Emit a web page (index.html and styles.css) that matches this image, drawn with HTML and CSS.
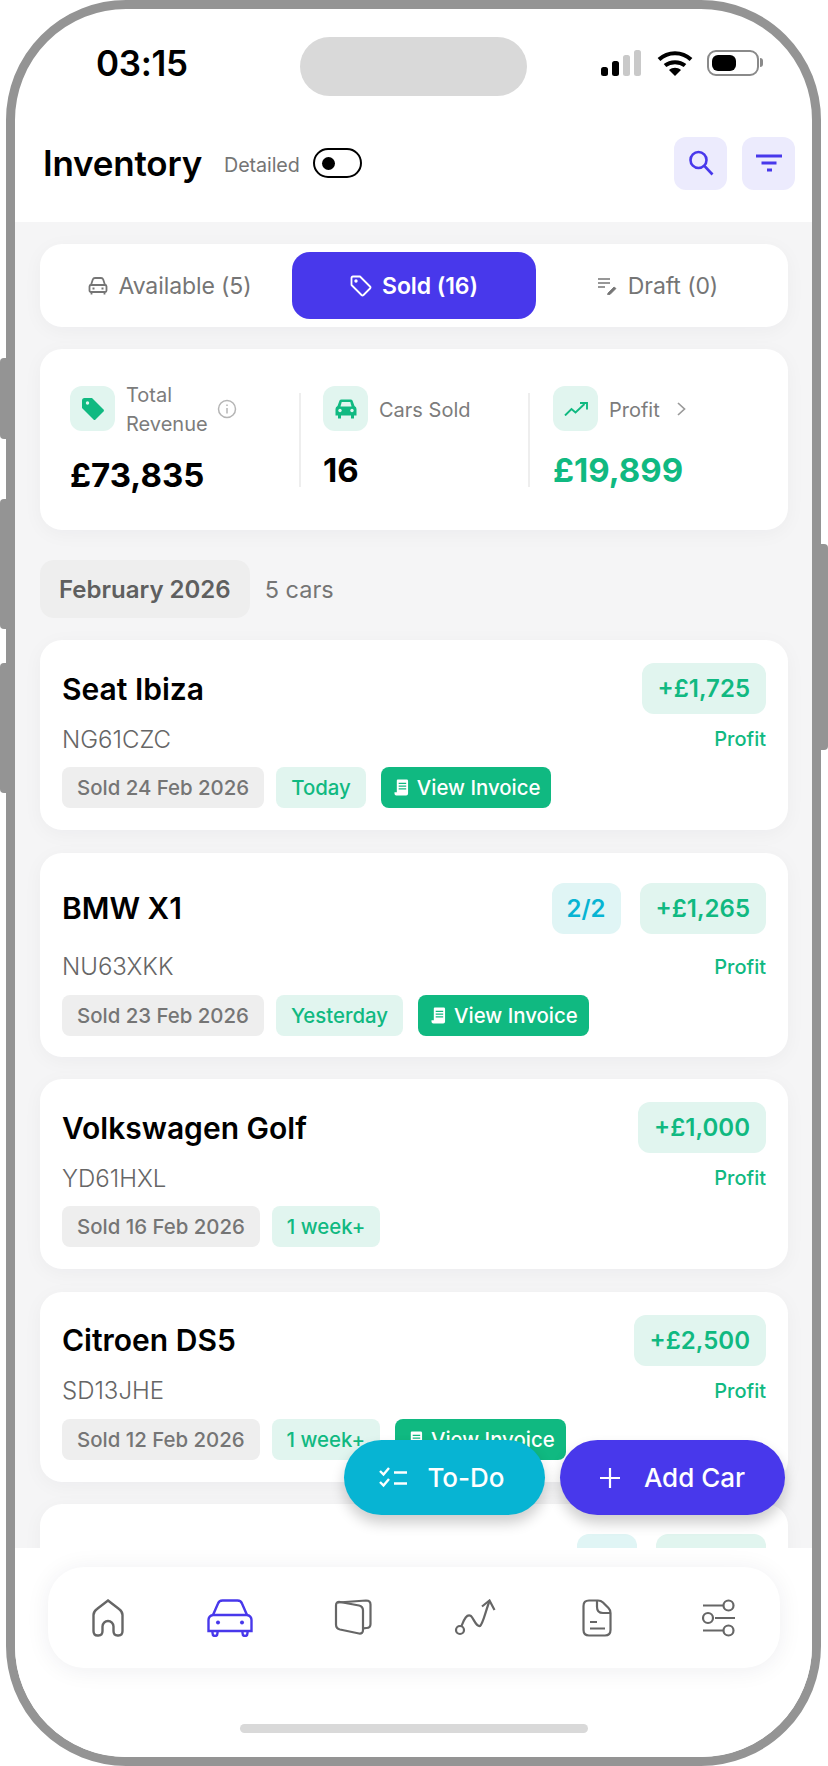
FILE: index.html
```html
<!DOCTYPE html>
<html lang="en">
<head>
<meta charset="UTF-8">
<title>Inventory</title>
<link rel="stylesheet" href="styles.css">
</head>
<body>

<svg class="sprite" aria-hidden="true">
  <symbol id="receipt" viewBox="0 0 16 18">
    <path fill="#fff" d="M4 0.5h9.5a1.5 1.5 0 0 1 1.5 1.5v13.5a2 2 0 0 1-2 2H2.5A2 2 0 0 1 0.5 15.5V14h2.5V1.5a1 1 0 0 1 1-1z"/>
    <path stroke="#10b981" stroke-width="1.4" d="M5 4.5h8M5 7.5h8M5 10.5h8"/>
  </symbol>
</svg>

<div class="side-btn side-btn-a"></div>
<div class="side-btn side-btn-b"></div>
<div class="side-btn side-btn-c"></div>
<div class="side-btn side-btn-r"></div>

<div class="phone">

  <div class="status-bar">
    <div class="time">03:15</div>
    <div class="notch"></div>
    <div class="status-icons">
      <svg width="40" height="26" viewBox="0 0 40 26">
        <rect x="0" y="17" width="7" height="9" rx="2.5" fill="#000"/>
        <rect x="11" y="11" width="7" height="15" rx="2.5" fill="#000"/>
        <rect x="22" y="5" width="7" height="21" rx="2.5" fill="#c9c9c9"/>
        <rect x="33" y="0" width="7" height="26" rx="2.5" fill="#c9c9c9"/>
      </svg>
      <svg width="36" height="26" viewBox="0 0 36 26">
        <path fill="none" stroke="#000" stroke-width="4" d="M2 9.5C11 1 25 1 34 9.5M8 15.5C13.5 11 22.5 11 28 15.5"/>
        <path d="M18 26l-6-6c3.5-3 8.5-3 12 0z" fill="#000"/>
      </svg>
      <div class="battery"><div class="battery-fill"></div></div>
    </div>
  </div>

  <div class="header">
    <div class="header-title">Inventory</div>
    <div class="detail-label">Detailed</div>
    <div class="toggle"><span class="toggle-knob"></span></div>
    <div class="header-actions">
      <div class="icon-btn">
        <svg width="26" height="26" viewBox="0 0 26 26" fill="none" stroke="#4838eb" stroke-width="2.6">
          <circle cx="10.5" cy="10" r="8"/>
          <path d="M16.5 16l8 8.5"/>
        </svg>
      </div>
      <div class="icon-btn">
        <svg width="26" height="18" viewBox="0 0 26 18" fill="none" stroke="#4838eb" stroke-width="2.8">
          <path d="M0 2h26M5.5 9h15M11 16h5"/>
        </svg>
      </div>
    </div>
  </div>

  <div class="content">

    <div class="tabs">
      <div class="tab">
        <svg width="20" height="20" viewBox="0 0 20 20" fill="none" stroke="#757575" stroke-width="1.8">
          <path d="M3 9l1.8-5.500Q5.300 2 7 2h6q1.700 0 2.200 1.500L17 9"/>
          <rect x="1.5" y="9" width="17" height="7" rx="1.5"/>
          <path d="M3.5 16v2.500M16.500 16v2.500M4.500 12.500h2M13.500 12.500h2"/>
        </svg>
        Available (5)
      </div>
      <div class="tab tab-active">
        <svg width="22" height="22" viewBox="0 0 22 22" fill="none" stroke="#fff" stroke-width="1.8" stroke-linejoin="round">
          <path d="M1.5 3q0-1.500 1.500-1.500h7l10 10q1 1 0 2l-6.500 6.500q-1 1-2 0l-10-10z"/>
          <circle cx="6" cy="6" r="0.8" fill="#fff"/>
        </svg>
        Sold (16)
      </div>
      <div class="tab">
        <svg width="20" height="18" viewBox="0 0 20 18" fill="none" stroke="#757575" stroke-width="1.6">
          <path d="M0 2h12M0 6h12M0 10h7"/>
          <path d="M10 16l6-6 2 1.500-6 6h-2.500z" fill="#757575" stroke-width="0.8"/>
        </svg>
        Draft (0)
      </div>
    </div>

    <div class="stats">
      <div class="stat stat-revenue">
        <div class="stat-head">
          <div class="stat-icon">
            <svg width="24" height="24" viewBox="0 0 24 24">
              <path fill="#10b981" d="M1 3.500Q1 1 3.500 1H11l11.500 11.500q1 1 0 2L14.500 22.500q-1 1-2 0L1 11z"/>
              <circle cx="6.5" cy="6" r="1.7" fill="#e1f5ef"/>
            </svg>
          </div>
          <div class="stat-label">Total<br>Revenue</div>
          <svg class="info-icon" width="20" height="20" viewBox="0 0 20 20" fill="none" stroke="#b5b5b5" stroke-width="1.5">
            <circle cx="10" cy="10" r="8.5"/>
            <path d="M10 9v5.500M10 5.500v1.500"/>
          </svg>
        </div>
        <div class="stat-value">£73,835</div>
      </div>
      <div class="stat-divider"></div>
      <div class="stat stat-cars">
        <div class="stat-head">
          <div class="stat-icon">
            <svg width="22" height="20" viewBox="0 0 22 20">
              <path fill="#10b981" d="M4.500 1.500Q5 0.500 6.500 0.500h9q1.500 0 2 1L19.500 7Q21.500 8 21.500 10v6.500h-2.500V19.500h-3V16.500H6V19.500H3V16.500H0.500V10Q0.500 8 2.500 7z"/>
              <path fill="#e1f5ef" d="M5.500 7.500L6.700 3h8.600l1.200 4.500z"/>
              <circle cx="5" cy="11.5" r="1.7" fill="#e1f5ef"/>
              <circle cx="17" cy="11.5" r="1.7" fill="#e1f5ef"/>
            </svg>
          </div>
          <div class="stat-label">Cars Sold</div>
        </div>
        <div class="stat-value">16</div>
      </div>
      <div class="stat-divider"></div>
      <div class="stat stat-profit">
        <div class="stat-head">
          <div class="stat-icon">
            <svg width="24" height="14" viewBox="0 0 24 14" fill="none" stroke="#10b981" stroke-width="1.9">
              <path d="M1 13.500l6.500-6.500 4 3.500 9-8.500"/>
              <path d="M16 1h7v6.500"/>
            </svg>
          </div>
          <div class="stat-label">Profit</div>
          <svg class="chevron" width="9" height="14" viewBox="0 0 9 14" fill="none" stroke="#9a9a9a" stroke-width="1.7">
            <path d="M1 1l6.500 6-6.500 6"/>
          </svg>
        </div>
        <div class="stat-value stat-green">£19,899</div>
      </div>
    </div>

    <div class="month-row">
      <div class="month-pill">February 2026</div>
      <div class="month-count">5 cars</div>
    </div>

    <div class="car-list">

      <div class="car-card">
        <div class="car-top">
          <div class="car-name">Seat Ibiza</div>
          <div class="car-badges"><span class="badge">+£1,725</span></div>
        </div>
        <div class="car-mid">
          <div class="car-reg">NG61CZC</div>
          <div class="profit-label">Profit</div>
        </div>
        <div class="car-tags">
          <span class="tag">Sold 24 Feb 2026</span>
          <span class="tag tag-green">Today</span>
          <span class="tag tag-invoice"><svg width="15" height="17"><use href="#receipt"/></svg>View Invoice</span>
        </div>
      </div>

      <div class="car-card car-card-split">
        <div class="car-top">
          <div class="car-name">BMW X1</div>
          <div class="car-badges">
            <span class="badge badge-cyan">2/2</span>
            <span class="badge">+£1,265</span>
          </div>
        </div>
        <div class="car-mid">
          <div class="car-reg">NU63XKK</div>
          <div class="profit-label">Profit</div>
        </div>
        <div class="car-tags">
          <span class="tag">Sold 23 Feb 2026</span>
          <span class="tag tag-green">Yesterday</span>
          <span class="tag tag-invoice"><svg width="15" height="17"><use href="#receipt"/></svg>View Invoice</span>
        </div>
      </div>

      <div class="car-card">
        <div class="car-top">
          <div class="car-name">Volkswagen Golf</div>
          <div class="car-badges"><span class="badge">+£1,000</span></div>
        </div>
        <div class="car-mid">
          <div class="car-reg">YD61HXL</div>
          <div class="profit-label">Profit</div>
        </div>
        <div class="car-tags">
          <span class="tag">Sold 16 Feb 2026</span>
          <span class="tag tag-green">1 week+</span>
        </div>
      </div>

      <div class="car-card">
        <div class="car-top">
          <div class="car-name">Citroen DS5</div>
          <div class="car-badges"><span class="badge">+£2,500</span></div>
        </div>
        <div class="car-mid">
          <div class="car-reg">SD13JHE</div>
          <div class="profit-label">Profit</div>
        </div>
        <div class="car-tags">
          <span class="tag">Sold 12 Feb 2026</span>
          <span class="tag tag-green">1 week+</span>
          <span class="tag tag-invoice"><svg width="15" height="17"><use href="#receipt"/></svg>View Invoice</span>
        </div>
      </div>

      <div class="car-card car-card-split">
        <div class="car-top">
          <div class="car-name"></div>
          <div class="car-badges">
            <span class="badge badge-cyan badge-blank"></span>
            <span class="badge badge-blank badge-blank-wide"></span>
          </div>
        </div>
      </div>

    </div>
  </div>

  <div class="fab-row">
    <div class="fab fab-todo">
      <svg width="29" height="22" viewBox="0 0 29 22" fill="none" stroke="#fff" stroke-width="2.4">
        <path d="M1 4l3.500 3.500L10 1M1 15l3.500 3.500L10 12M15 5.500h13M15 16.500h13"/>
      </svg>
      To-Do
    </div>
    <div class="fab fab-add">
      <svg width="20" height="20" viewBox="0 0 20 20" fill="none" stroke="#fff" stroke-width="2.2">
        <path d="M10 0v20M0 10h20"/>
      </svg>
      Add Car
    </div>
  </div>

  <div class="bottom">
    <div class="nav">
      <div class="nav-item nav-home">
        <svg width="32" height="38" viewBox="0 0 32 38" fill="none" stroke="#666" stroke-width="2.4">
          <path d="M16 1.500L27 10Q30.500 12.500 30.500 16V32Q30.500 36.500 26.500 36.500H25.500Q21.500 36.500 21.500 32V27.500A5.500 5.500 0 0 0 10.500 27.500V32Q10.500 36.500 6.500 36.500H5.500Q1.500 36.500 1.500 32V16Q1.500 12.500 5 10Z"/>
        </svg>
      </div>
      <div class="nav-item nav-car">
        <svg width="46" height="38" viewBox="0 0 46 38" fill="none" stroke="#4838eb" stroke-width="2.4">
          <path d="M6 16L11 4.500Q12 1.500 15.500 1.500H30.500Q34 1.500 35 4.500L40 16"/>
          <path d="M6 16H40Q44.500 17 44.500 21V32H1.500V21Q1.500 17 6 16Z"/>
          <path d="M5.500 32V34Q5.500 37 8 37T10.500 34V32M35.500 32V34Q35.500 37 38 37T40.500 34V32"/>
          <circle cx="11" cy="23.5" r="2" fill="#4838eb" stroke="none"/>
          <circle cx="35" cy="23.5" r="2" fill="#4838eb" stroke="none"/>
        </svg>
      </div>
      <div class="nav-item">
        <svg width="38" height="38" viewBox="0 0 38 38" fill="none" stroke="#666" stroke-width="2.2">
          <path d="M2 6.500Q2 2.500 6 3L25 6.500Q29 7.500 29 11.500V31Q29 35 25 34.500L6 30.500Q2 29.500 2 25.500Z"/>
          <path d="M4 3.500L32 1.500Q36.500 1.500 36.500 5.500V25Q36.500 29 32.500 29L29 29.300"/>
        </svg>
      </div>
      <div class="nav-item">
        <svg width="42" height="38" viewBox="0 0 42 38" fill="none" stroke="#666" stroke-width="2.2">
          <circle cx="6" cy="31" r="4"/>
          <path d="M7.500 27C10 20 13 14.500 17 17C20 20 22 28 26 27C29 25 31 14 35.500 2"/>
          <path d="M28 7.500L35.500 1.500L40.500 11"/>
        </svg>
      </div>
      <div class="nav-item">
        <svg width="30" height="38" viewBox="0 0 30 38" fill="none" stroke="#666" stroke-width="2.2">
          <path d="M7 1.500H16Q19 1.500 21 3.500L26.500 9Q28.500 11 28.500 14V31Q28.500 36.500 23 36.500H7Q1.500 36.500 1.500 31V7Q1.500 1.500 7 1.500Z"/>
          <path d="M15 1.500V8Q15 14 21 14H28.500"/>
          <path d="M8 23H15M8 29.500H23"/>
        </svg>
      </div>
      <div class="nav-item">
        <svg width="36" height="38" viewBox="0 0 36 38" fill="none" stroke="#666" stroke-width="2.2">
          <path d="M2 6.500H22M14 19H34M2 31.500H22"/>
          <circle cx="27.5" cy="6.5" r="5"/>
          <circle cx="7" cy="19" r="5"/>
          <circle cx="27.5" cy="31.5" r="5"/>
        </svg>
      </div>
    </div>
    <div class="home-bar"></div>
  </div>

</div>

</body>
</html>
```

FILE: styles.css
```css
* {
  box-sizing: border-box;
}
body {
  font-family: Inter, "Noto Sans", sans-serif;
  margin: 0;
  padding: 0;
  width: 828px;
  height: 1766px;
  position: relative;
  overflow: hidden;
  background: #fff;
}
.sprite {
  display: none;
}

/* hardware buttons */
.side-btn {
  position: absolute;
  width: 8px;
  background: #949494;
}
.side-btn-a {
  left: 0;
  top: 358px;
  height: 81px;
  border-radius: 4px 0 0 4px;
}
.side-btn-b {
  left: 0;
  top: 499px;
  height: 130px;
  border-radius: 4px 0 0 4px;
}
.side-btn-c {
  left: 0;
  top: 663px;
  height: 130px;
  border-radius: 4px 0 0 4px;
}
.side-btn-r {
  right: 0;
  top: 544px;
  height: 206px;
  border-radius: 0 4px 4px 0;
}

.phone {
  position: relative;
  margin-left: 6px;
  width: 815px;
  height: 1766px;
  border: 9px solid #949494;
  border-radius: 120px;
  overflow: hidden;
  background: #fff;
  display: flex;
  flex-direction: column;
}

/* status bar */
.status-bar {
  height: 110px;
  flex-shrink: 0;
  display: flex;
  align-items: flex-start;
  padding-left: 81px;
  padding-top: 28px;
}
.time {
  margin-top: 1px;
  font-size: 35px;
  font-weight: 600;
  line-height: 50px;
  letter-spacing: -0.3px;
  width: 204px;
  color: #000;
}
.notch {
  width: 227px;
  height: 59px;
  border-radius: 30px;
  background: #d9d9d9;
}
.status-icons {
  display: flex;
  align-items: center;
  gap: 16px;
  margin-left: 74px;
  margin-top: 13px;
}
.battery {
  position: relative;
  width: 52px;
  height: 26px;
  margin-left: -2px;
  padding: 3px;
  border: 2px solid #8a8a8a;
  border-radius: 9px;
}
.battery::after {
  content: "";
  position: absolute;
  right: -6px;
  top: 6px;
  width: 3px;
  height: 9px;
  border-radius: 0 3px 3px 0;
  background: #8a8a8a;
}
.battery-fill {
  width: 24px;
  height: 100%;
  border-radius: 6px;
  background: #000;
}

/* header */
.header {
  height: 103px;
  flex-shrink: 0;
  display: flex;
  align-items: center;
  padding: 0 17px 15px 28px;
}
.header-title {
  font-size: 35px;
  font-weight: 600;
  letter-spacing: -0.2px;
  color: #000;
}
.detail-label {
  margin-top: 3px;
  margin-left: 22px;
  font-size: 19.7px;
  letter-spacing: -0.1px;
  color: #757575;
}
.toggle {
  width: 49px;
  height: 30px;
  margin-left: 13px;
  padding: 7px;
  border: 2px solid #000;
  border-radius: 15px;
}
.toggle-knob {
  display: block;
  width: 13px;
  height: 13px;
  border-radius: 50%;
  background: #000;
}
.header-actions {
  margin-left: auto;
  display: flex;
  gap: 15px;
}
.icon-btn {
  width: 53px;
  height: 53px;
  border-radius: 12px;
  background: #ecebfd;
  display: flex;
  align-items: center;
  justify-content: center;
}

/* scrolling area */
.content {
  height: 1326px;
  flex-shrink: 0;
  overflow: hidden;
  padding: 22px 24px 0 25px;
  background: #f5f5f6;
}
.tabs {
  display: grid;
  grid-template-columns: repeat(3, 1fr);
  padding: 8px;
  height: 83px;
  border-radius: 22px;
  background: #fff;
  box-shadow: 0 4px 20px rgba(30,30,60,0.04);
}
.tab {
  display: flex;
  align-items: center;
  justify-content: center;
  gap: 10px;
  font-size: 23px;
  letter-spacing: -0.1px;
  color: #757575;
}
.tab-active {
  border-radius: 18px;
  font-weight: 600;
  color: #fff;
  background: #4838eb;
}

/* stats */
.stats {
  display: flex;
  align-items: flex-start;
  height: 181px;
  margin-top: 22px;
  padding: 37px 0 0 30px;
  border-radius: 22px;
  background: #fff;
  box-shadow: 0 4px 20px rgba(30,30,60,0.04);
}
.stat {
  flex-shrink: 0;
}
.stat-revenue {
  width: 229px;
}
.stat-cars {
  width: 227px;
  padding-left: 22px;
}
.stat-profit {
  padding-left: 23px;
}
.stat-divider {
  width: 2px;
  height: 94px;
  margin-top: 7px;
  flex-shrink: 0;
  background: #eeeeee;
}
.stat-head {
  display: flex;
  align-items: center;
  height: 45px;
}
.stat-icon {
  width: 45px;
  height: 45px;
  flex-shrink: 0;
  display: flex;
  align-items: center;
  justify-content: center;
  border-radius: 12px;
  background: #e1f5ef;
}
.stat-label {
  margin-left: 11px;
  margin-top: 3px;
  font-size: 20px;
  line-height: 29px;
  color: #7c7c7c;
}
.info-icon {
  margin-left: 9px;
  flex-shrink: 0;
}
.chevron {
  margin-left: 17px;
}
.stat-value {
  margin-top: 19px;
  font-size: 33px;
  font-weight: 700;
  line-height: 41px;
  color: #000;
}
.stat-revenue .stat-value {
  margin-top: 24px;
}
.stat-green {
  color: #10b981;
}

/* month */
.month-row {
  display: flex;
  align-items: center;
  margin-top: 30px;
}
.month-pill {
  height: 58px;
  padding: 0 19px;
  display: flex;
  align-items: center;
  border-radius: 14px;
  font-size: 24px;
  font-weight: 600;
  color: #5f5f5f;
  background: #eeeeee;
}
.month-count {
  margin-left: 15px;
  font-size: 23.5px;
  color: #757575;
}

/* car cards */
.car-list {
  display: flex;
  flex-direction: column;
  gap: 22.5px;
  margin-top: 22px;
}
.car-card {
  padding: 23px 22px 22px 22px;
  height: 190px;
  flex-shrink: 0;
  border-radius: 22px;
  background: #fff;
  box-shadow: 0 4px 20px rgba(30,30,60,0.04);
}
.car-card-split {
  height: 204px;
  padding-top: 30px;
}
.car-top {
  display: flex;
  align-items: center;
  justify-content: space-between;
  height: 51px;
}
.car-name {
  font-size: 30px;
  font-weight: 600;
  color: #000;
}
.car-badges {
  display: flex;
  gap: 19px;
}
.badge {
  height: 51px;
  padding: 0 16px;
  display: flex;
  align-items: center;
  border-radius: 12px;
  font-size: 24px;
  font-weight: 600;
  color: #10b981;
  background: #e1f5ef;
}
.badge-cyan {
  padding: 0 15px;
  color: #07b4d3;
  background: #e0f5f5;
}
.badge-blank {
  width: 60px;
}
.badge-blank-wide {
  width: 110px;
}
.car-mid {
  display: flex;
  align-items: center;
  justify-content: space-between;
  height: 30px;
  margin-top: 10px;
}
.car-card-split .car-mid {
  margin-top: 18px;
}
.car-reg {
  font-size: 24px;
  font-weight: 300;
  color: #666;
}
.profit-label {
  font-size: 20px;
  font-weight: 500;
  color: #10b981;
}
.car-tags {
  display: flex;
  gap: 12px;
  margin-top: 13px;
}
.tag {
  height: 41px;
  padding: 0 15px;
  display: flex;
  align-items: center;
  border-radius: 8px;
  font-size: 20.4px;
  font-weight: 500;
  color: #757575;
  background: #eeeeee;
}
.tag-green {
  color: #10b981;
  background: #e1f5ef;
}
.tag-invoice {
  margin-left: 3px;
  padding: 0 11px 0 13px;
  gap: 8px;
  color: #fff;
  background: #10b981;
}

/* floating buttons */
.fab-row {
  position: absolute;
  left: 329px;
  top: 1431px;
  display: flex;
  gap: 15px;
}
.fab {
  height: 75px;
  display: flex;
  align-items: center;
  justify-content: center;
  border-radius: 38px;
  font-size: 26px;
  font-weight: 500;
  color: #fff;
  box-shadow: 0 8px 14px rgba(0,0,0,0.2);
}
.fab-todo {
  width: 201px;
  padding-right: 5px;
  gap: 19px;
  background: #07b4d3;
}
.fab-add {
  width: 225px;
  gap: 24px;
  background: #4838eb;
}

/* bottom nav */
.bottom {
  flex: 1;
  padding: 19px 0 0 33px;
  background: #fff;
}
.nav {
  display: grid;
  grid-template-columns: repeat(6, 1fr);
  width: 732px;
  height: 101px;
  border-radius: 36px;
  background: #fff;
  box-shadow: 0 2px 24px rgba(30,30,60,0.07);
}
.nav-item {
  display: flex;
  align-items: center;
  justify-content: center;
}
.nav-home svg {
  margin-right: 3px;
}
.nav-car svg {
  margin-right: 2px;
}
.home-bar {
  width: 348px;
  height: 9px;
  margin: 56px 0 0 192px;
  border-radius: 5px;
  background: #d9d9d9;
}
```
